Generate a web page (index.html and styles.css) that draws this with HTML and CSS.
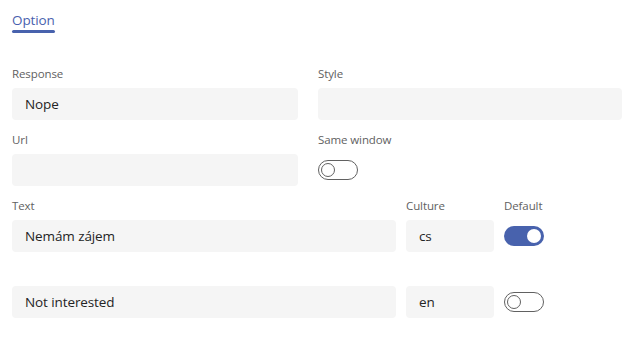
FILE: index.html
```html
<!DOCTYPE html>
<html lang="cs">
<head>
<meta charset="utf-8">
<title>Option</title>
<link rel="stylesheet" href="styles.css">
</head>
<body>
<div class="page">
  <div class="tabs">
    <div class="tab active">Option</div>
  </div>

  <div class="grid-top">
    <div class="field">
      <div class="label">Response</div>
      <div class="input">Nope</div>
    </div>
    <div class="field">
      <div class="label">Style</div>
      <div class="input"></div>
    </div>
    <div class="field">
      <div class="label">Url</div>
      <div class="input"></div>
    </div>
    <div class="field">
      <div class="label">Same window</div>
      <div class="toggle-box"><span class="toggle off"><span class="knob"></span></span></div>
    </div>
  </div>

  <div class="texts">
    <div class="text-row">
      <div class="field col-text">
        <div class="label">Text</div>
        <div class="input">Nemám zájem</div>
      </div>
      <div class="field col-culture">
        <div class="label">Culture</div>
        <div class="input">cs</div>
      </div>
      <div class="field col-default">
        <div class="label">Default</div>
        <div class="toggle-box"><span class="toggle on"><span class="knob"></span></span></div>
      </div>
    </div>
    <div class="text-row">
      <div class="field col-text">
        <div class="label"></div>
        <div class="input">Not interested</div>
      </div>
      <div class="field col-culture">
        <div class="label"></div>
        <div class="input">en</div>
      </div>
      <div class="field col-default">
        <div class="label"></div>
        <div class="toggle-box"><span class="toggle off"><span class="knob"></span></span></div>
      </div>
    </div>
  </div>
</div>
</body>
</html>
```
FILE: styles.css
```css
html, body {
  margin: 0;
  padding: 0;
  background: #ffffff;
}
body {
  font-family: "Open Sans", "Noto Sans", "Liberation Sans", sans-serif;
  color: #242424;
}
.page {
  padding: 10px 16px 0 12px;
}
.tabs {
  display: flex;
}
.tab {
  font-size: 13.5px;
  line-height: 20px;
  color: #4a5fae;
  padding-bottom: 0;
  position: relative;
  letter-spacing: -0.1px;
}
.tab.active::after {
  content: "";
  display: block;
  height: 3px;
  border-radius: 2px;
  background: #4862ad;
  margin-top: 0;
  width: 43px;
}
.grid-top {
  display: grid;
  grid-template-columns: 286px 304px;
  column-gap: 20px;
  row-gap: 12px;
  margin-top: 33px;
}
.field {
  display: flex;
  flex-direction: column;
}
.label {
  font-size: 11.5px;
  line-height: 16px;
  height: 16px;
  color: #616161;
  margin-bottom: 6px;
  letter-spacing: -0.1px;
}
.input {
  height: 32px;
  background: #f5f5f5;
  border-radius: 4px;
  font-size: 13.5px;
  line-height: 32px;
  padding: 0 13px;
  color: #242424;
  letter-spacing: -0.1px;
}
.toggle-box {
  height: 32px;
  display: flex;
  align-items: center;
}
.toggle {
  box-sizing: border-box;
  width: 40px;
  height: 20px;
  border-radius: 10px;
  display: flex;
  align-items: center;
  padding: 0 2px;
}
.toggle.off {
  border: 1px solid #616161;
  justify-content: flex-start;
}
.toggle.on {
  background: #4862ad;
  justify-content: flex-end;
  padding: 0 3px;
}
.knob {
  box-sizing: border-box;
  width: 14px;
  height: 14px;
  border-radius: 50%;
}
.toggle.off .knob {
  border: 1px solid #616161;
  background: #fff;
}
.toggle.on .knob {
  background: #fff;
}
.texts {
  margin-top: 12px;
  display: flex;
  flex-direction: column;
  row-gap: 12px;
}
.text-row {
  display: flex;
  column-gap: 10px;
}
.col-text {
  width: 384px;
}
.col-culture {
  width: 88px;
}
.col-default {
  width: 60px;
}
```
